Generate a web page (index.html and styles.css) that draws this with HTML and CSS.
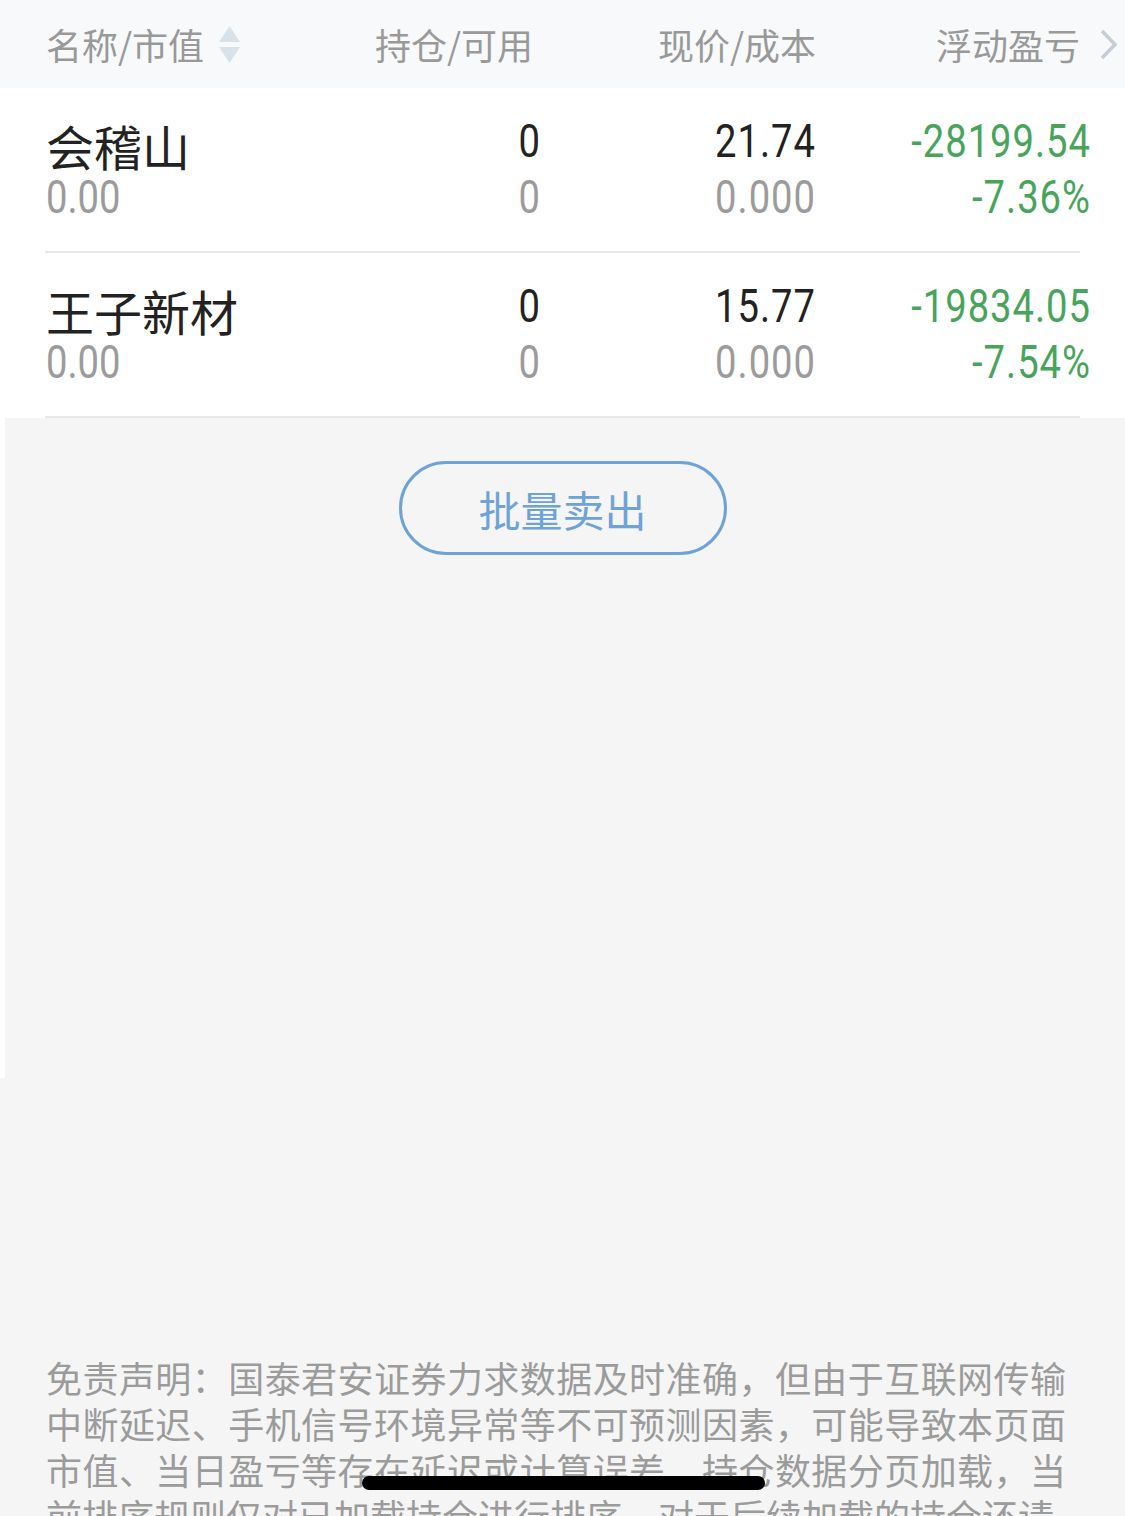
FILE: index.html
```html
<!DOCTYPE html>
<html>
	<head>
		<meta charset="utf-8">
		<title>持仓</title>
		<link rel="stylesheet" href="styles.css">
	</head>
	<body>
		<div class="head-row">
			<div class="head-cell name-head">名称/市值
				<svg class="sort" width="21" height="37" viewBox="0 0 21 37"><path d="M10.5 0 L21 16 L0 16 Z" fill="#d9e1e9"/><path d="M0 21 L21 21 L10.5 37 Z" fill="#d9e1e9"/></svg>
			</div>
			<div class="head-cell num-head pos-head">持仓/可用</div>
			<div class="head-cell num-head">现价/成本</div>
			<div class="head-cell num-head pl-head">浮动盈亏
				<svg class="chevron" width="17" height="31" viewBox="0 0 17 31"><path d="M2 2 L15 15.5 L2 29" fill="none" stroke="#c6cdd5" stroke-width="3.5"/></svg>
			</div>
		</div>

		<div class="list">
			<div class="stock">
				<div class="cell name-cell">
					<div class="stock-name">会稽山</div>
					<div class="num sub">0.00</div>
				</div>
				<div class="cell num-cell">
					<div class="num main">0</div>
					<div class="num sub">0</div>
				</div>
				<div class="cell num-cell">
					<div class="num main">21.74</div>
					<div class="num sub">0.000</div>
				</div>
				<div class="cell num-cell down">
					<div class="num main">-28199.54</div>
					<div class="num sub">-7.36%</div>
				</div>
			</div>
			<div class="stock">
				<div class="cell name-cell">
					<div class="stock-name">王子新材</div>
					<div class="num sub">0.00</div>
				</div>
				<div class="cell num-cell">
					<div class="num main">0</div>
					<div class="num sub">0</div>
				</div>
				<div class="cell num-cell">
					<div class="num main">15.77</div>
					<div class="num sub">0.000</div>
				</div>
				<div class="cell num-cell down">
					<div class="num main">-19834.05</div>
					<div class="num sub">-7.54%</div>
				</div>
			</div>
		</div>

		<div class="actions">
			<button class="batch-sell">批量卖出</button>
		</div>

		<p class="disclaimer">免责声明：国泰君安证券力求数据及时准确，但由于互联网传输中断延迟、手机信号环境异常等不可预测因素，可能导致本页面市值、当日盈亏等存在延迟或计算误差，持仓数据分页加载，当前排序规则仅对已加载持仓进行排序，对于后续加载的持仓还请</p>

		<div class="home-bar"></div>
	</body>
</html>
```

FILE: styles.css
```css
html, body {margin: 0px; padding: 0px;}
body {background-color: #f5f5f5; font-family: "Noto Sans CJK SC", "Noto Sans", sans-serif; height: 1516px; overflow: hidden;}

.head-row, .stock {display: grid; grid-template-columns: 250px 245px 275px 275px; padding: 0px 34px 0px 46px;}

.head-row {height: 88px; background-color: #f8f9fa; align-items: center;}
.head-cell {font-size: 36px; color: #999999; line-height: 48px; display: flex; align-items: center;}
.num-head {justify-content: flex-end;}
.pos-head {padding-right: 8px;}
.pl-head {margin-right: -26px;}
.sort {margin-left: 15px;}
.chevron {margin-left: 20px;}

.list {background-color: #ffffff;}
.stock {position: relative; height: 165px;}
.stock::after {content: ""; position: absolute; left: 45px; right: 45px; bottom: 0px; height: 2px; background-color: #e8e8e8;}
.cell {padding-top: 25px;}
.name-cell {padding-top: 30px;}
.num-cell {text-align: right;}

.stock-name {font-size: 48px; line-height: 54px; color: #222222;}
.num {font-family: Roboto, "DejaVu Sans Condensed", sans-serif; font-size: 46px; line-height: 56px; letter-spacing: 1.2px; transform: scaleX(0.83); transform-origin: right center;}
.name-cell .num {transform-origin: left center; letter-spacing: 0px;}
.name-cell .sub {line-height: 36px; margin-top: 7px;}
.main {color: #222222;}
.sub {color: #9b9b9b;}
.down .num {color: #47a45a;}

.actions {height: 617px; padding-top: 43px; border-left: 5px solid #ffffff; display: flex; justify-content: center; align-items: flex-start;}
.batch-sell {width: 328px; height: 94px; margin-left: -5px; border: 3px solid #6ea3d8; border-radius: 47px; background: transparent; color: #6ea3d8; font-family: "Noto Sans CJK SC", sans-serif; font-size: 42px; padding: 0px;}

.disclaimer {margin: 276px 0px 0px 0px; padding: 0px 59px 0px 46px; font-size: 36px; line-height: 46px; color: #9b9b9b; text-align: justify;}

.home-bar {position: fixed; left: 362px; bottom: 26px; width: 403px; height: 14px; border-radius: 7px; background-color: #000000;}
```
